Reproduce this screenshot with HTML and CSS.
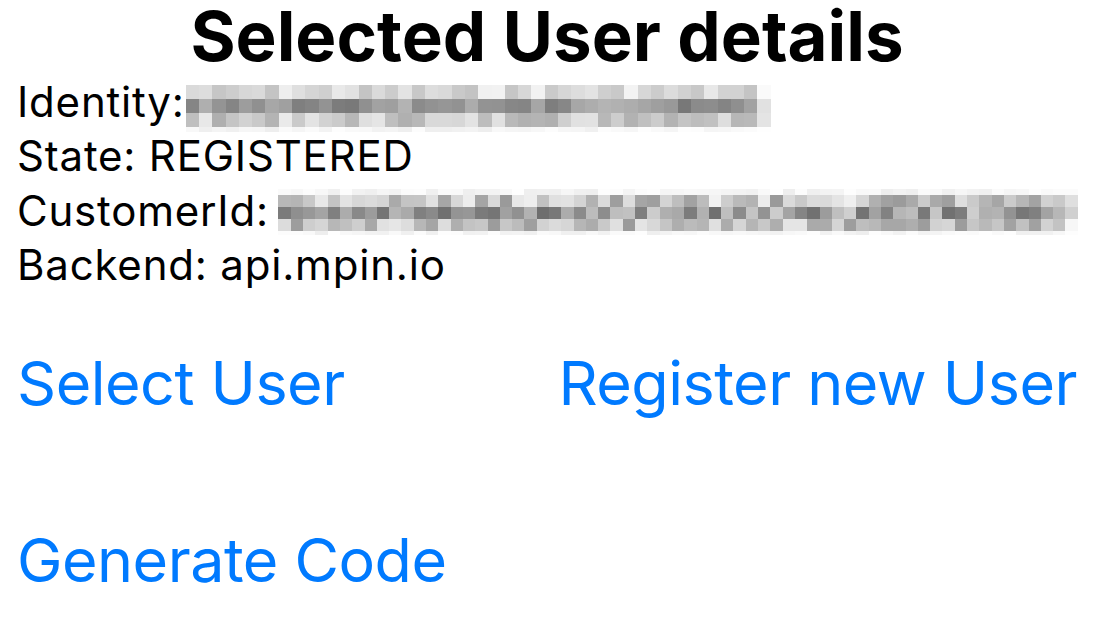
FILE: index.html
```html
<!DOCTYPE html>
<html>
<head>
<meta charset="utf-8">
<link rel="stylesheet" href="styles.css">
</head>
<body>
<main class="screen">
  <h1 class="title">Selected User details</h1>
  <section class="details">
    <div class="line">Identity:<span class="mosaic mosaic-identity" data-kind="identity"></span></div>
    <div class="line">State: REGISTERED</div>
    <div class="line">CustomerId: <span class="mosaic mosaic-customer" data-kind="customer"></span></div>
    <div class="line">Backend: api.mpin.io</div>
  </section>
  <div class="actions">
    <a class="action">Select User</a>
    <a class="action">Register new User</a>
  </div>
  <div class="actions actions-second">
    <a class="action">Generate Code</a>
  </div>
</main>
<script src="script.js"></script>
</body>
</html>
```
FILE: styles.css
```css
html, body {
  margin: 0;
  padding: 0;
  background: #ffffff;
}
.screen {
  width: 1095px;
  height: 623px;
  box-sizing: border-box;
  padding: 0 18px 0 17px;
  font-family: Inter, "Liberation Sans", sans-serif;
  color: #000;
  overflow: hidden;
}
.title {
  margin: 0;
  font-size: 69px;
  line-height: 72px;
  font-weight: 700;
  text-align: center;
  white-space: nowrap;
}
.details {
  margin-top: 3px;
}
.line {
  font-size: 42px;
  letter-spacing: 0.8px;
  line-height: 54.3px;
  height: 54.3px;
  white-space: nowrap;
}
.mosaic {
  display: inline-flex;
  flex-direction: column;
  vertical-align: top;
  letter-spacing: 0;
}
.mosaic-identity {
  margin-top: 10px;
  margin-left: 1px;
}
.mosaic-customer {
  margin-top: 5px;
  margin-left: -3px;
}
.mosaic-row {
  display: flex;
}
.mosaic-identity .mosaic-cell {
  width: 13.3px;
  height: 14px;
}
.mosaic-identity .mosaic-row:last-child .mosaic-cell {
  height: 5px;
}
.mosaic-customer .mosaic-cell {
  width: 12.3px;
  height: 12.3px;
}
.mosaic-customer .mosaic-row:first-child .mosaic-cell {
  height: 6px;
}
.mosaic-customer .mosaic-row:last-child .mosaic-cell {
  height: 4px;
}
.actions {
  margin-top: 50.6px;
  display: flex;
  justify-content: space-between;
  height: 80px;
}
.actions-second {
  margin-top: 97px;
}
.action {
  color: #007aff;
  font-size: 61px;
  letter-spacing: -0.5px;
  line-height: 80px;
  cursor: pointer;
}
```
FILE: script.js
```js
(function () {
  function rng(seed) {
    var s = seed;
    return function () {
      s = (s * 9301 + 49297) % 233280;
      return s / 233280;
    };
  }
  var config = {
    identity: { cols: 44, seed: 7, rows: [[218, 26], [150, 32], [205, 30], [246, 8]] },
    customer: { cols: 65, seed: 13, rows: [[246, 8], [198, 45], [158, 50], [192, 38], [246, 8]] }
  };
  document.querySelectorAll('.mosaic').forEach(function (m) {
    var cfg = config[m.dataset.kind];
    var r = rng(cfg.seed);
    cfg.rows.forEach(function (base, y) {
      var row = document.createElement('div');
      row.className = 'mosaic-row';
      for (var x = 0; x < cfg.cols; x++) {
        var c = document.createElement('div');
        c.className = 'mosaic-cell';
        var v = Math.round(base[0] + (r() - 0.5) * base[1] * 2);
        if (x === cfg.cols - 1) v = Math.round((v + 255 * 2) / 3);
        v = Math.max(105, Math.min(255, v));
        c.style.background = 'rgb(' + v + ',' + v + ',' + v + ')';
        row.appendChild(c);
      }
      m.appendChild(row);
    });
  });
})();
```
